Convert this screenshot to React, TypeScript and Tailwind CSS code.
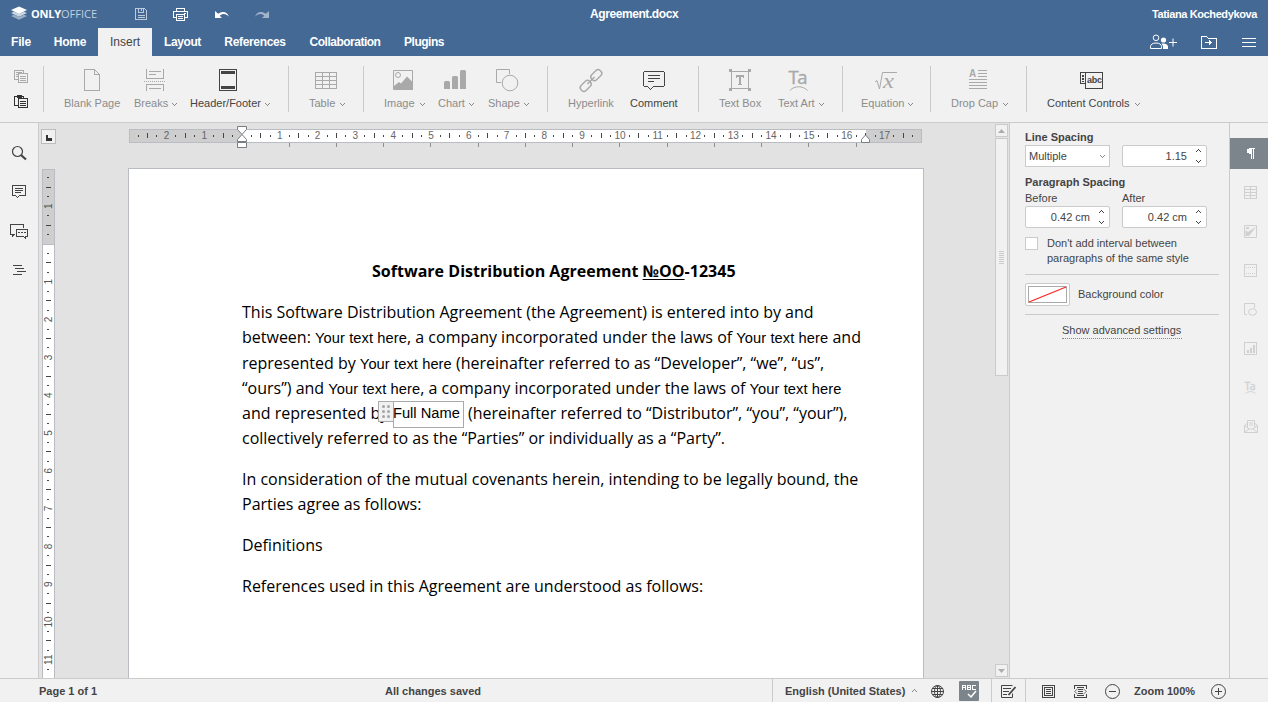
import React from "react";

type Box = { x: number; y: number; w: number; h: number; className?: string; children: React.ReactNode; soft?: boolean };

function Ico({ x, y, w, h, className = "", children, soft }: Box) {
  return (
    <svg
      width={w}
      height={h}
      viewBox={`${x} ${y} ${w} ${h}`}
      fill="none"
      stroke="currentColor"
      shapeRendering={soft ? "auto" : "crispEdges"}
      className={"block shrink-0 overflow-visible " + className}
    >
      {children}
    </svg>
  );
}

function Caret({ className = "" }: { className?: string }) {
  return (
    <svg width="5" height="3" viewBox="0 0 5 3" fill="currentColor" shapeRendering="crispEdges" className={"block shrink-0 " + className}>
      <path d="M0 0h1v1H0zM1 1h1v1H1zM2 2h1v1H2zM3 1h1v1H3zM4 0h1v1H4z" />
    </svg>
  );
}

function Tool({ label, className, x, iconClass, caret, on, soft, children }: {
  label: string; className: string; x: number; iconClass: string; caret?: boolean; on?: boolean; soft?: boolean; children: React.ReactNode;
}) {
  return (
    <div className={"shrink-0 pt-[11px] " + (on ? "text-[#444] " : "text-[#a9a9a9] ") + className}>
      <Ico x={x} y={67} w={34} h={26} soft={soft} className={iconClass}>{children}</Ico>
      <div className={"flex h-[20px] items-center justify-between whitespace-nowrap " + (on ? "text-[#444]" : "text-[#8c8c8c]")}>
        <span>{label}</span>
        {caret && <Caret className="mt-[2px] text-[#888]" />}
      </div>
    </div>
  );
}

const Sep = ({ className }: { className: string }) => <div className={"mt-[10px] h-[46px] w-px shrink-0 bg-[#cbcbcb] " + className} />;

function Header() {
  return (
    <header className="h-[56px] bg-[#446995] text-white">
      <div className="flex h-[28px] items-center">
        <Ico x={11} y={6} w={17} h={16} soft className="ml-[11px]">
          <g stroke="none">
            <path d="M11 16l3-1.3 5 2.2 5-2.2 3 1.3-8 3.8z" fill="#9bafc7" />
            <path d="M11 13l3-1.3 5 2.2 5-2.2 3 1.3-8 3.8z" fill="#ccd7e3" />
            <path d="M19 6.5l8 3.5-8 3.9L11 10z" fill="#fff" />
          </g>
        </Ico>
        <div className="ml-[3px] w-[67px] whitespace-nowrap font-['Open_Sans',sans-serif] text-[11px] leading-[14px]">
          <b className="font-bold tracking-[-0.2px]">ONLY</b><span className="text-[#c3cfdd]">OFFICE</span>
        </div>
        <Ico x={134} y={6} w={14} h={16} className="ml-[36px] text-[#bccadb]">
          <path d="M135.500 8.500h9l2 2v9h-11zM138.500 8.500v4h5v-4M141.500 9v2M137.500 15.500h7M137.500 17.500h7" />
        </Ico>
        <Ico x={173} y={7} w={15} h={15} className="ml-[25px]">
          <path d="M176.500 11.500v-3h8v3M176.500 17.500h-3v-6h14v6h-3M176.500 14.500h8v6h-8zM178 16.500h5M178 18.500h5M184 13.500h2" />
        </Ico>
        <Ico x={214} y={8} w={15} h={12} soft className="ml-[26px]">
          <path stroke="none" fill="currentColor" d="M215 11v7h7l-2.300-2.300c3-2.400 6.300-2.200 9.300 1-1.500-4.500-6-6.400-10.800-3z" />
        </Ico>
        <Ico x={255} y={8} w={15} h={12} soft className="ml-[26px] text-[#a2b4ca]">
          <path stroke="none" fill="currentColor" d="M269 11v7h-7l2.300-2.300c-3-2.400-6.300-2.200-9.300 1 1.500-4.500 6-6.400 10.800-3z" />
        </Ico>
        <div className="ml-[320px] w-[88px] whitespace-nowrap text-[12px] font-bold tracking-[-0.42px]">Agreement.docx</div>
        <div className="mr-[11px] flex-1 text-right text-[11px] font-bold tracking-[-0.38px]">Tatiana Kochedykova</div>
      </div>
      <div className="flex h-[28px] text-center text-[12px] leading-[28px] font-bold tracking-[-0.2px]">
        <div className="w-[42px]">File</div>
        <div className="w-[56px]">Home</div>
        <div className="w-[54px] bg-[#f1f1f1] font-normal tracking-normal text-[#444]">Insert</div>
        <div className="w-[61px] tracking-[-0.4px]">Layout</div>
        <div className="w-[84px] tracking-[-0.34px]">References</div>
        <div className="w-[96px] tracking-[-0.5px]">Collaboration</div>
        <div className="w-[62px] tracking-[-0.5px]">Plugins</div>
        <div className="flex flex-1 items-center justify-end pr-[12px]">
          <Ico x={1149} y={34} w={29} h={17} soft>
            <circle cx="1156" cy="37.800" r="2.800" />
            <path d="M1150.500 48.500v-2c0-2 2-3.500 5.500-3.500s5.500 1.500 5.500 3.500v2z" />
            <circle cx="1163.500" cy="40" r="2.600" fill="currentColor" stroke="none" />
            <path d="M1163 49v-3l-1.500-2.500c3-.500 6.500.500 6.500 3V49z" fill="currentColor" stroke="none" />
            <path d="M1169 42.500h8M1173 38.500v8" />
          </Ico>
          <Ico x={1200} y={34} w={18} h={17} className="ml-[22px]">
            <path d="M1201.500 36.500h5l2 2h8v10h-15zM1205 42.500h6" />
            <path d="M1209 39.500l3.500 3-3.500 3z" fill="currentColor" stroke="none" />
          </Ico>
          <Ico x={1242} y={34} w={14} h={17} className="ml-[24px]">
            <path d="M1242 38.500h14M1242 42.500h14M1242 46.500h14" />
          </Ico>
        </div>
      </div>
    </header>
  );
}

function Toolbar() {
  return (
    <div className="flex h-[67px] border-b border-[#cbcbcb] bg-[#f1f1f1] text-[11px]">
      <div className="w-[43px] shrink-0 pt-[13px] pl-[13px]">
        <Ico x={13} y={69} w={16} h={15} className="text-[#a9a9a9]">
          <path d="M17.500 79.500h-3v-9h9v3M16 72.500h6M16 74.500h2M16 76.500h2M18.500 73.500h9v9h-9zM20 76.500h6M20 78.500h6M20 80.500h6" />
        </Ico>
        <Ico x={13} y={95} w={16} h={15} className="mt-[10px] text-[#333]">
          <path d="M18.500 106.500h-4v-9h9v2M18.500 99.500h9v9h-9zM20 102.500h6M20 104.500h6M20 106.500h6" />
          <path d="M17 97.500h5" strokeWidth="3" />
        </Ico>
      </div>
      <Sep className="" />
      <Tool label="Blank Page" className="ml-[20px] w-[56px]" x={75} iconClass="ml-[11px]">
        <path d="M84.500 69.500h10l5 5v16h-15zM94.500 69.500v5h5" />
      </Tool>
      <Tool label="Breaks" caret className="ml-[14px] w-[43px]" x={138} iconClass="ml-[4px]">
        <path d="M146.500 69v9.500h17V69M149 71.500h12M149 74.500h7M146.500 91v-6.500h17V91M149 88.500h12" />
        <path d="M144 81.500h21" strokeDasharray="1 1" />
      </Tool>
      <Tool label="Header/Footer" caret on className="ml-[13px] w-[80px]" x={211} iconClass="ml-[21px]">
        <path d="M219.500 69.500h17v21h-17z" />
        <path d="M221 72.500h14M221 87.500h14" strokeWidth="3" />
      </Tool>
      <Sep className="ml-[18px]" />
      <Tool label="Table" caret className="ml-[20px] w-[36px]" x={309} iconClass="">
        <path d="M315.500 72.500h21v16h-21zM315 76.500h22M315 80.500h22M315 84.500h22M322.500 72v17M329.500 72v17" />
      </Tool>
      <Sep className="ml-[18px]" />
      <Tool label="Image" caret className="ml-[20px] w-[41px]" x={386} iconClass="ml-[2px]" soft>
        <path d="M393.500 70.500h19v19h-19z" />
        <circle cx="398" cy="75" r="2.500" />
        <path d="M394 86l5-4 2 1.500 6-7 6 6v7.500h-19z" fill="currentColor" stroke="none" />
      </Tool>
      <Tool label="Chart" caret className="ml-[13px] w-[36px]" x={438} iconClass="" soft>
        <path d="M444 82.500q0-1.500 1.500-1.500h3q1.500 0 1.500 1.500V89h-6zM452 77.500q0-1.500 1.500-1.500h3q1.500 0 1.500 1.500V89h-6zM460 71.500q0-1.500 1.500-1.500h3q1.500 0 1.500 1.500V89h-6z" fill="currentColor" stroke="none" />
      </Tool>
      <Tool label="Shape" caret className="ml-[14px] w-[41px]" x={490} iconClass="ml-[2px]" soft>
        <path d="M501 82.500h-4.500v-13h13v4.500" />
        <circle cx="510" cy="83" r="7.800" />
      </Tool>
      <Sep className="ml-[18px]" />
      <Tool label="Hyperlink" className="ml-[20px] w-[46px]" x={574} iconClass="ml-[6px]" soft>
        <g transform="rotate(-45 591 80.500)" strokeWidth="1.400">
          <rect x="577.500" y="77" width="12" height="7" rx="3" />
          <rect x="592.500" y="77" width="12" height="7" rx="3" />
          <path d="M586 80.500h10" />
        </g>
      </Tool>
      <Tool label="Comment" on className="ml-[16px] w-[48px]" x={637} iconClass="ml-[7px]">
        <path d="M644.500 71.500h19l1 1v13l-1 1h-10l-3 3-3-3h-3l-1-1v-13zM648 75.500h12M648 78.500h12M648 81.500h6" />
      </Tool>
      <Sep className="ml-[20px]" />
      <Tool label="Text Box" className="ml-[20px] w-[43px]" x={723} iconClass="ml-[4px]">
        <path d="M731.500 71.500h17v17h-17z" />
        <path d="M729 69h3v3h-3zM748 69h3v3h-3zM729 88h3v3h-3zM748 88h3v3h-3zM736 75h8v3h-1v-1h-2v7h1v1h-4v-1h1v-7h-2v1h-1z" fill="currentColor" stroke="none" />
      </Tool>
      <Tool label="Text Art" caret className="ml-[16px] w-[46px]" x={782} iconClass="ml-[4px]" soft>
        <text x="788.500" y="83.500" fontSize="18.500" fill="currentColor" stroke="currentColor" strokeWidth="0.400" className="font-['Open_Sans',sans-serif]" textLength="19">Ta</text>
        <path d="M790 90.500c4-5 13-5 17.500 0" />
      </Tool>
      <Sep className="ml-[18px]" />
      <Tool label="Equation" caret className="ml-[18px] w-[52px]" x={869} iconClass="ml-[8px]" soft>
        <path d="M875 82l2-1.500 2.500 8.500 3-16.500h14.500" />
        <text x="883" y="88" fontSize="21" fill="currentColor" stroke="none" className="font-['Liberation_Serif',serif] italic" textLength="11" lengthAdjust="spacingAndGlyphs">x</text>
      </Tool>
      <Sep className="ml-[17px]" />
      <Tool label="Drop Cap" caret className="ml-[20px] w-[57px]" x={962} iconClass="ml-[11px]">
        <text x="969" y="77" fontSize="10" fill="currentColor" stroke="none" fontWeight="bold" textLength="7.500">A</text>
        <path d="M978 70.500h9M978 73.500h9M978 76.500h9M969 79.500h18M969 82.500h18M969 85.500h18M969 88.500h18" />
      </Tool>
      <Sep className="ml-[18px]" />
      <Tool label="Content Controls" caret on className="ml-[20px] w-[93px]" x={1074} iconClass="ml-[27px]">
        <path d="M1085.500 83.500h-5v-11h5M1085.500 72.500h17v16h-17z" />
        <path d="M1082 75h2v2h-2zM1082 78h2v2h-2zM1082 81h2v1h-2z" fill="currentColor" stroke="none" />
        <text x="1087" y="83" fontSize="9" fill="currentColor" stroke="none" fontWeight="bold" textLength="15">abc</text>
      </Tool>
    </div>
  );
}

function LeftPanel() {
  return (
    <div className="w-[39px] shrink-0 border-r border-[#cbcbcb] bg-[#f1f1f1] pt-[22px] text-[#444]">
      <Ico x={10} y={145} w={18} h={16} soft className="ml-[10px]">
        <circle cx="17.500" cy="151.500" r="5" strokeWidth="1.200" />
        <path d="M21 155l5 4.500" strokeWidth="2.200" />
      </Ico>
      <Ico x={10} y={184} w={18} h={16} className="mt-[23px] ml-[10px]">
        <path d="M12.500 185.500h13v10h-6l-2 2-2-2h-3zM15 188.500h8M15 190.500h8M15 192.500h6" />
      </Ico>
      <Ico x={10} y={223} w={18} h={17} className="mt-[23px] ml-[10px]">
        <path d="M15 234.500h-1l-1.500 1.500v-1.500h-2v-10h13v3M16.500 229.500h11v7h-2v2l-2-2h-7zM18 232.500h2M21 232.500h2M24 232.500h2" />
      </Ico>
      <Ico x={10} y={262} w={18} h={16} className="mt-[22px] ml-[10px]">
        <path d="M13 265.500h9M15 268.500h9M17 271.500h9M13 274.500h9" />
      </Ico>
    </div>
  );
}

const CM = 37.795;

function HRuler() {
  const ticks: React.ReactNode[] = [];
  for (let q = -11; q <= 71; q++) {
    if (q === 0) continue;
    const px = 242 + (q * CM) / 4;
    if (q % 4 === 0) {
      ticks.push(<text key={q} x={px} y={139} textAnchor="middle" fontSize="10" fill="#666" stroke="none">{Math.abs(q / 4)}</text>);
    } else {
      const half = q % 2 === 0;
      ticks.push(<rect key={q} x={Math.floor(px)} y={half ? 133 : 135} width="1" height={half ? 5 : 2} fill="#444" stroke="none" />);
    }
  }
  const tabs = Array.from({ length: 13 }, (_, i) => Math.floor(242 + (i + 1) * CM * 1.25));
  return (
    <Ico x={128} y={125} w={796} h={24} className="ml-[71px]">
      <g stroke="none">
        <path d="M129 129h793v14H129z" fill="#b9bcc0" />
        <path d="M130 130h112v12H130zM866 130h55v12h-55z" fill="#cecece" />
        <path d="M242 130h624v12H242z" fill="#fff" />
        {tabs.map((t) => <rect key={t} x={t} y="143" width="1" height="4" fill="#8c8f93" />)}
      </g>
      {ticks}
      <g stroke="#777d83" fill="#fff" shapeRendering="auto">
        <path d="M237.500 126.500h9v3l-4.500 5-4.500-5z" />
        <path d="M242 134.500l4.500 5v2h-9v-2zM237.500 142.500h9v5h-9z" />
        <path d="M865.500 135l4 4.500v3h-8v-3z" />
      </g>
    </Ico>
  );
}

function VRuler() {
  const ticks: React.ReactNode[] = [];
  for (let q = -7; q <= 45; q++) {
    if (q === 0) continue;
    const py = 244 + (q * CM) / 4;
    if (q % 4 === 0) {
      ticks.push(<text key={q} transform={`translate(52 ${py}) rotate(-90)`} textAnchor="middle" fontSize="10" fill="#555" stroke="none">{Math.abs(q / 4)}</text>);
    } else {
      const half = q % 2 === 0;
      ticks.push(<rect key={q} x={half ? 46 : 47} y={Math.floor(py)} width={half ? 5 : 2} height="1" fill="#444" stroke="none" />);
    }
  }
  return (
    <Ico x={42} y={169} w={13} h={509} className="mt-[25px]">
      <g stroke="none">
        <path d="M42 169h13v509H42z" fill="#b9bcc0" />
        <path d="M43 170h11v74H43z" fill="#cecece" />
        <path d="M43 245h11v433H43z" fill="#fff" />
      </g>
      {ticks}
    </Ico>
  );
}

const Ph = () => <span className="font-['Liberation_Sans',sans-serif] text-[14.67px] leading-[0px] tracking-[0.09px]">Your text here</span>;

function Page() {
  return (
    <div className="ml-[73px] h-[510px] w-[796px] shrink-0 overflow-hidden border border-b-0 border-[#b9bcc0] bg-white pl-[113px] font-['Open_Sans',sans-serif] text-[16px] leading-[25.200px] whitespace-nowrap text-black">
      <div className="mt-[90px] ml-[130px] font-bold tracking-[0.02px]">Software Distribution Agreement <span className="underline decoration-1 underline-offset-2">№OO</span>-12345</div>
      <div className="mt-[16px]">
        <div className="h-[25.200px]">This Software Distribution Agreement (the Agreement) is entered into by and</div>
        <div className="h-[25.200px]">between: <Ph />, a company incorporated under the laws of <Ph /> and</div>
        <div className="h-[25.200px]">represented by <Ph /> (hereinafter referred to as “Developer”, “we”, “us”,</div>
        <div className="h-[25.200px]">“ours”) and <Ph />, a company incorporated under the laws of <Ph /></div>
        <div className="flex h-[25.200px]">
          <span className="w-[151px]">and represented by</span>
          <span className="relative w-[75px] font-['Liberation_Sans',sans-serif] text-[14.67px]">
            <span className="absolute top-0 left-0 h-[27px] w-[71px] border border-[#aaa] bg-white" />
            <span className="absolute top-0 -left-[15px] grid h-[21px] w-[16px] grid-cols-[3px_3px] content-center justify-center gap-[2px] border border-[#aaa] bg-[#f1f1f1]">
              {Array.from({ length: 6 }, (_, i) => <i key={i} className="size-[3px] rounded-full bg-[#a5a5a5]" />)}
            </span>
            <span className="relative">Full Name</span>
          </span>
          <span>(hereinafter referred to “Distributor”, “you”, “your”),</span>
        </div>
        <div className="h-[25.200px]">collectively referred to as the “Parties” or individually as a “Party”.</div>
      </div>
      <div className="mt-[15.800px]">
        <div>In consideration of the mutual covenants herein, intending to be legally bound, the</div>
        <div>Parties agree as follows:</div>
      </div>
      <div className="mt-[15.800px]">Definitions</div>
      <div className="mt-[15.800px]">References used in this Agreement are understood as follows:</div>
    </div>
  );
}

function Scrollbar() {
  return (
    <div className="mt-[1px] ml-auto flex w-[14px] shrink-0 flex-col text-[#adadad]">
      <div className="flex h-[13px] w-[13px] items-center justify-center border border-[#cbcbcb] bg-[#f1f1f1]">
        <svg width="7" height="4" viewBox="0 0 7 4" className="block"><path d="M3.500 0L7 4H0z" fill="currentColor" /></svg>
      </div>
      <div className="mt-[1px] flex h-[238px] w-[13px] flex-col items-center justify-center gap-px border border-[#cbcbcb] bg-[#f1f1f1]">
        {Array.from({ length: 7 }, (_, i) => <i key={i} className="h-px w-[5px] bg-[#cbcbcb]" />)}
      </div>
      <div className="mt-auto mb-[1px] flex h-[13px] w-[13px] items-center justify-center border border-[#cbcbcb] bg-[#f1f1f1]">
        <svg width="7" height="4" viewBox="0 0 7 4" className="block"><path d="M3.500 4L7 0H0z" fill="currentColor" /></svg>
      </div>
    </div>
  );
}

function Editor() {
  return (
    <div className="flex w-[971px] shrink-0 overflow-hidden border-r border-[#cbcbcb] bg-[#e2e2e2]">
      <div className="w-[16px] shrink-0 pt-[6px] pl-[2px]">
        <div className="h-[15px] w-[15px] border border-[#b9bcc0] bg-[#f1f1f1] pt-[5px] pl-[4px]">
          <div className="h-[6px] w-[6px] border-b-3 border-l-2 border-[#333]" />
        </div>
        <div className="pl-px"><VRuler /></div>
      </div>
      <div className="w-[869px] shrink-0">
        <div className="h-[45px] pt-[2px] pl-[2px]"><HRuler /></div>
        <Page />
      </div>
      <Scrollbar />
    </div>
  );
}

function Spin({ value }: { value: string }) {
  return (
    <div className="flex h-[22px] w-[85px] items-center justify-end rounded-[2px] border border-[#cbcbcb] bg-white pr-[5px]">
      <span>{value}</span>
      <div className="ml-[9px] flex flex-col gap-[8px]">
        <Caret className="rotate-180" />
        <Caret />
      </div>
    </div>
  );
}

function RightPanel() {
  return (
    <div className="w-[220px] shrink-0 border-r border-[#cbcbcb] bg-[#f1f1f1] pt-[7px] pr-[10px] pl-[15px] text-[11px] text-[#444]">
      <div className="h-[15px] leading-[15px] font-bold">Line Spacing</div>
      <div className="flex gap-[12px]">
        <div className="flex h-[22px] w-[85px] items-center justify-between border border-[#cbcbcb] bg-white pr-[4px] pl-[3px]">
          <span>Multiple</span><Caret className="text-[#888]" />
        </div>
        <Spin value="1.15" />
      </div>
      <div className="mt-[7px] h-[16px] leading-[16px] font-bold">Paragraph Spacing</div>
      <div className="flex h-[16px] gap-[12px] leading-[16px]">
        <span className="w-[85px]">Before</span><span>After</span>
      </div>
      <div className="flex gap-[12px]"><Spin value="0.42 cm" /><Spin value="0.42 cm" /></div>
      <div className="mt-[8px] flex">
        <div className="mt-px h-[13px] w-[13px] border border-[#cbcbcb] bg-white" />
        <div className="ml-[9px] h-[38px] leading-[15px] whitespace-nowrap">Don't add interval between<br />paragraphs of the same style</div>
      </div>
      <div className="h-px bg-[#cbcbcb]" />
      <div className="mt-[8px] flex items-center">
        <div className="h-[23px] w-[45px] rounded-[2px] border border-[#cbcbcb] bg-white p-[2px]">
          <svg width="39" height="17" viewBox="0 0 39 17" className="block">
            <rect x="0.500" y="0.500" width="38" height="16" fill="#fff" stroke="#aaa" />
            <path d="M1 16L38 1" stroke="#f22" strokeWidth="1.200" />
          </svg>
        </div>
        <span className="ml-[8px]">Background color</span>
      </div>
      <div className="mt-[8px] h-px bg-[#cbcbcb]" />
      <div className="mt-[8px] ml-[37px] h-[16px] w-[120px] border-b border-dotted border-[#888] leading-[15px] whitespace-nowrap">Show advanced settings</div>
    </div>
  );
}

const Cell = ({ children }: { children: React.ReactNode }) => <div className="flex h-[39px] items-center justify-center pl-[3px]">{children}</div>;

function Strip() {
  return (
    <div className="flex-1 bg-[#f1f1f1] pt-[15px] text-[#d0d0d0]">
      <div className="mb-[4px] flex h-[31px] items-center justify-center bg-[#7d858c] pl-[2px] text-white">
        <Ico x={1246} y={147} w={9} h={13}>
          <path d="M1250 148h5v1h-1v10h-1v-10h-1v10h-1v-5c-6 0-6-6-1-6z" fill="currentColor" stroke="none" />
        </Ico>
      </div>
      <Cell><Ico x={0} y={0} w={13} h={13}><path d="M.500 .500h12v12H.500zM0 3.500h13M0 6.500h13M0 9.500h13M6.500 0v13" /></Ico></Cell>
      <Cell><Ico x={0} y={0} w={13} h={13} soft><path d="M.500 .500h12v12H.500z" /><path d="M1.500 11V5l2.500 2 2-1.500 6-3.500L5 11zM2 2h3v2H2z" fill="currentColor" stroke="none" /></Ico></Cell>
      <Cell><Ico x={0} y={0} w={13} h={13}><path d="M.500 .500h12v12H.500z" /><path d="M0 3.500h13M0 9.500h13" strokeDasharray="1 1" /></Ico></Cell>
      <Cell><Ico x={0} y={0} w={13} h={13} soft><path d="M3 11.500H.500V.500h10V5" /><ellipse cx="8.500" cy="9" rx="4" ry="3.300" /></Ico></Cell>
      <Cell><Ico x={0} y={0} w={13} h={13}><path d="M.500 .500h12v12H.500z" /><path d="M3 8h2v3H3zM6 6h2v5H6zM9 3h2v8H9z" fill="currentColor" stroke="none" /></Ico></Cell>
      <Cell>
        <Ico x={0} y={0} w={13} h={13} soft>
          <text x="0.500" y="8.500" fontSize="11" fill="currentColor" stroke="currentColor" strokeWidth="0.300" textLength="11" className="font-['Open_Sans',sans-serif]">Ta</text>
          <path d="M1.500 12.500c2.500-2.500 7.500-2.500 10 0" />
        </Ico>
      </Cell>
      <Cell><Ico x={0} y={0} w={14} h={13} soft><path d="M3 3.500L.500 5.500v7h13v-7L11 3.500M3.500 7.500v-7h7v7M5 3h4M5 5h4M.500 5.500L5 9h4l4.500-3.500M.500 12.500L5 9M13.500 12.500L9 9" /></Ico></Cell>
    </div>
  );
}

function StatusBar() {
  return (
    <footer className="flex h-[24px] items-center border-t border-[#cbcbcb] bg-[#f1f1f1] text-[11px] leading-[24px] font-bold whitespace-nowrap text-[#444]">
      <span className="ml-[39px] w-[346px]">Page 1 of 1</span>
      <span className="w-[387px]">All changes saved</span>
      <div className="h-full w-px bg-[#cbcbcb]" />
      <span className="ml-[12px] w-[121px]">English (United States)</span>
      <Caret className="ml-[6px] rotate-180 text-[#888]" />
      <Ico x={931} y={685} w={13} h={13} soft className="ml-[14px] mt-px">
        <circle cx="937.500" cy="691.500" r="6" />
        <ellipse cx="937.500" cy="691.500" rx="3" ry="6" />
        <path d="M937.500 685v13M931 691.500h13M932 688.500h11M932 694.500h11" />
      </Ico>
      <div className="ml-[15px] flex h-[20px] w-[20px] justify-center rounded-[1px] bg-[#7d858c]">
        <Ico x={0} y={0} w={18} h={20} className="text-white">
          <path d="M2.500 9V4.500h3V9M2 6.500h4M7.500 4.500h3v4h-3zM7 6.500h3M15.500 4.500h-3v4h3" />
          <path d="M8 13l3 3 5-6" shapeRendering="auto" strokeWidth="1.500" />
        </Ico>
      </div>
      <div className="ml-[12px] h-full w-px shrink-0 bg-[#cbcbcb]" />
      <Ico x={1001} y={684} w={16} h={15} soft className="ml-[9px] mt-px">
        <path d="M1012.500 685.500h-11v12h11v-4M1003 688.500h8M1003 691.500h6M1003 694.500h4" />
        <path d="M1015.500 687l-7 8" strokeWidth="1.800" />
      </Ico>
      <div className="ml-[8px] h-full w-px bg-[#cbcbcb]" />
      <Ico x={1042} y={685} w={13} h={13} className="ml-[16px] mt-px">
        <path d="M1042.500 685.500h12v12h-12zM1044.500 687.500h8v8h-8zM1046 689.500h5M1046 691.500h5M1046 693.500h5" />
      </Ico>
      <Ico x={1074} y={685} w={13} h={13} className="ml-[19px] mt-px">
        <path d="M1074.500 689v-3.500h12v3.500M1074.500 694v3.500h12V694M1077 687.500h7M1078 689.500h5M1078 691.500h5M1078 693.500h5M1077 695.500h7" />
        <path d="M1077.500 689l-3 2.500 3 2.500M1083.500 689l3 2.500-3 2.500" stroke="#777" shapeRendering="auto" />
      </Ico>
      <Ico x={1104} y={683} w={17} h={17} soft className="ml-[17px] mt-px">
        <circle cx="1112.500" cy="691.500" r="7" /><path d="M1109 691.500h7" />
      </Ico>
      <span className="ml-[13px] w-[62px]">Zoom 100%</span>
      <Ico x={1210} y={683} w={17} h={17} soft className="ml-[14px] mt-px">
        <circle cx="1218.500" cy="691.500" r="7" /><path d="M1215 691.500h7M1218.500 688v7" />
      </Ico>
    </footer>
  );
}

export default function App() {
  return (
    <div className="h-[702px] w-[1268px] overflow-hidden bg-[#f1f1f1] font-['Liberation_Sans',Arial,sans-serif]">
      <Header />
      <Toolbar />
      <main className="flex h-[555px]">
        <LeftPanel />
        <Editor />
        <RightPanel />
        <Strip />
      </main>
      <StatusBar />
    </div>
  );
}
